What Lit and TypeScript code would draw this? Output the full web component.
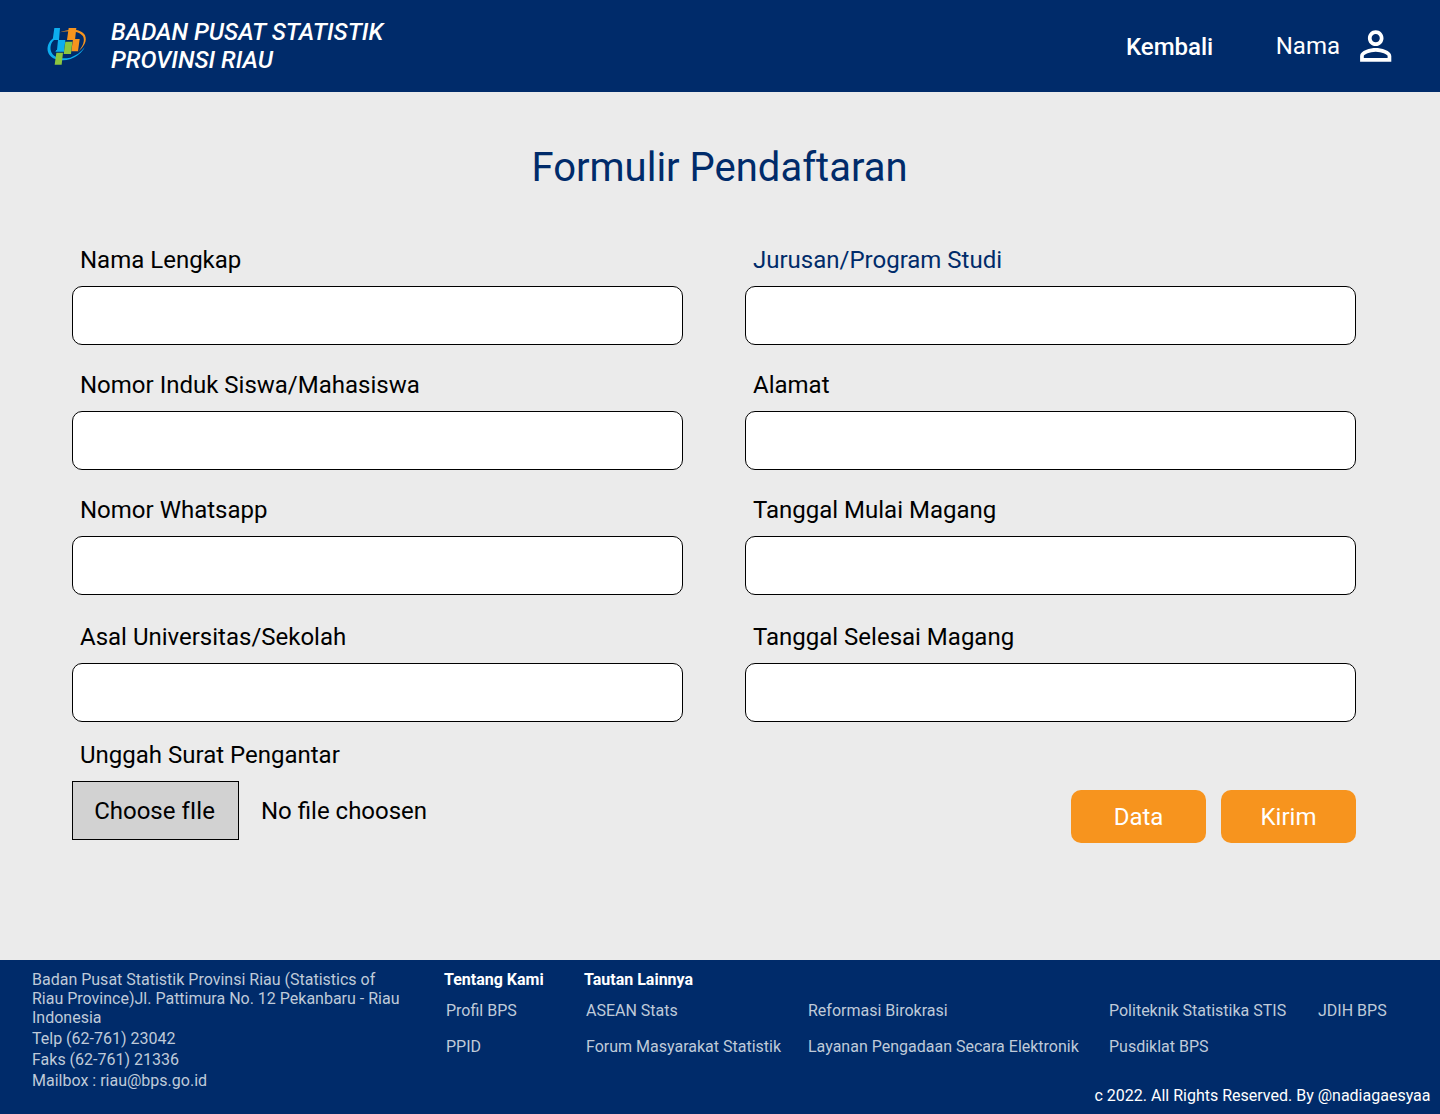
import { LitElement, html, css } from "lit";
import { customElement, property } from "lit/decorators.js";

@customElement("site-header")
class SiteHeader extends LitElement {
  static styles = css`
    :host { display: block; }
    .bar { display: flex; align-items: flex-start; box-sizing: border-box; height: 92px; padding: 15px 40px; background: #002b6a; color: #fff; font-size: 24px; line-height: 28px; }
    .logo { flex: none; width: 60px; height: 60px; }
    .org { margin: 3px 0 0 11px; font-weight: 500; font-style: italic; }
    .nav { display: flex; margin-left: auto; align-items: flex-start; }
    .back { margin: 18px 62.5px 0 0; font-weight: 500; }
    .name { margin: 17px 12px 0 0; }
    .user { width: 46px; height: 44px; margin: 9px 2px 0 0; }
  `;
  render() {
    return html`<header class="bar">
      <svg class="logo" viewBox="0 0 180 180" aria-hidden="true">
        <path d="M41 69C24 80 20 98 24 111C31 134 63 141 92 132C110 126 126 113 134 97C122 113 108 122 91 128C62 134 38 127 33 109C29 94 34 82 42 75Z" fill="#0daeef"/>
        <path d="M60 52C90 39 126 42 135 61C142 78 133 95 113 112C128 95 136 78 129 64C120 50 92 45 60 52Z" fill="#f7941e"/>
        <path d="M43 39H60L57 75H38ZM54 75H76L72 110H46L49 105H51Z" fill="#0daeef"/>
        <path d="M86 39H109L105 75H81ZM99 72H119L114 109H94Z" fill="#f7941e"/>
        <path d="M76 80H97L93 117H71ZM49 113H69L65 149H44Z" fill="#8cc63f"/>
      </svg>
      <div class="org">BADAN PUSAT STATISTIK<br>PROVINSI RIAU</div>
      <nav class="nav">
        <span class="back">Kembali</span>
        <span class="name">Nama</span>
        <svg class="user" viewBox="0 0 46 44" aria-hidden="true" fill="#fff">
          <path transform="translate(.3 -1.5) scale(1.95 1.965)" d="M12 5.9c1.16 0 2.1.94 2.1 2.1s-.94 2.1-2.1 2.1S9.9 9.16 9.9 8s.94-2.1 2.1-2.1m0 9c2.97 0 6.1 1.46 6.1 2.1v1.1H5.9V17c0-.64 3.13-2.1 6.1-2.1M12 4C9.79 4 8 5.79 8 8s1.79 4 4 4 4-1.79 4-4-1.79-4-4-4zm0 9c-2.67 0-8 1.34-8 4v3h16v-3c0-2.66-5.33-4-8-4z"/>
        </svg>
      </nav>
    </header>`;
  }
}

@customElement("form-field")
class FormField extends LitElement {
  @property() label = "";
  @property({ type: Boolean, reflect: true }) active = false;
  static styles = css`
    :host { display: block; color: #000; }
    :host([active]) { color: #002b6a; }
    .label { display: block; padding-left: 8px; margin-bottom: 12px; line-height: 28px; }
    .input { display: block; box-sizing: border-box; width: 100%; height: 59px; padding: 0 16px; border: 1px solid #000; border-radius: 10px; background: #fff; font: inherit; outline: none; }
  `;
  render() {
    return html`<label><span class="label">${this.label}</span><input class="input" type="text"></label>`;
  }
}

@customElement("site-footer")
class SiteFooter extends LitElement {
  static styles = css`
    :host { display: block; }
    .foot { display: grid; grid-template-columns: 412px 140px 1fr; box-sizing: border-box; height: 154px; padding: 10px 0 0 32px; background: #002b6a; color: #bfcad9; font-size: 16px; line-height: 19px; }
    .address { display: flex; flex-direction: column; gap: 2px; white-space: nowrap; grid-row: 1 / 3; }
    .head { color: #fff; font-weight: 700; }
    .links { display: grid; row-gap: 17px; padding: 12px 0 0 2px; white-space: nowrap; }
    .wide { grid-template-columns: 222px 301px 209px auto; }
    .copy { grid-column: 2 / 4; justify-self: end; align-self: end; padding: 0 9.5px 9px 0; color: #fff; }
  `;
  render() {
    const other = ["ASEAN Stats", "Reformasi Birokrasi", "Politeknik Statistika STIS", "JDIH BPS", "Forum Masyarakat Statistik", "Layanan Pengadaan Secara Elektronik", "Pusdiklat BPS"];
    return html`<footer class="foot">
      <div class="address">
        <span>Badan Pusat Statistik Provinsi Riau (Statistics of<br>Riau Province)Jl. Pattimura No. 12 Pekanbaru - Riau<br>Indonesia</span>
        <span>Telp (62-761) 23042</span>
        <span>Faks (62-761) 21336</span>
        <span>Mailbox : riau@bps.go.id</span>
      </div>
      <div><div class="head">Tentang Kami</div><div class="links"><span>Profil BPS</span><span>PPID</span></div></div>
      <div><div class="head">Tautan Lainnya</div><div class="links wide">${other.map((t) => html`<span>${t}</span>`)}</div></div>
      <div class="copy">c 2022. All Rights Reserved. By @nadiagaesyaa</div>
    </footer>`;
  }
}

@customElement("app-root")
class AppRoot extends LitElement {
  static styles = css`
    :host { display: flex; flex-direction: column; height: 1114px; background: #ebebeb; font-family: Roboto, sans-serif; font-size: 24px; line-height: 28px; color: #000; }
    .main { flex: 1; padding: 52px 84px 0 72px; }
    .title { margin: 0 -11px 55px 0; text-align: center; font-weight: 400; font-size: 40px; line-height: 47px; color: #002b6a; }
    .columns { display: grid; grid-template-columns: 611px 611px; column-gap: 62px; }
    .col { display: flex; flex-direction: column; gap: 26px; }
    .last { margin-top: 2px; }
    .bottom { display: flex; justify-content: space-between; margin-top: 19px; }
    .upload-label { padding-left: 8px; margin-bottom: 12px; }
    .upload { display: flex; align-items: center; gap: 22px; }
    .choose { box-sizing: border-box; width: 167px; height: 59px; padding: 0 2px 0 0; border: 1px solid #000; background: #d2d2d2; color: #000; font: inherit; text-align: center; }
    .actions { display: flex; gap: 15px; margin-top: 49px; }
    .action { width: 135px; height: 53px; padding: 0; border: 0; border-radius: 10px; background: #f7941e; color: #fff; font: inherit; }
  `;
  render() {
    return html`
      <site-header></site-header>
      <main class="main">
        <h1 class="title">Formulir Pendaftaran</h1>
        <div class="columns">
          <div class="col">
            <form-field label="Nama Lengkap"></form-field>
            <form-field label="Nomor Induk Siswa/Mahasiswa"></form-field>
            <form-field label="Nomor Whatsapp"></form-field>
            <form-field class="last" label="Asal Universitas/Sekolah"></form-field>
          </div>
          <div class="col">
            <form-field active label="Jurusan/Program Studi"></form-field>
            <form-field label="Alamat"></form-field>
            <form-field label="Tanggal Mulai Magang"></form-field>
            <form-field class="last" label="Tanggal Selesai Magang"></form-field>
          </div>
        </div>
        <div class="bottom">
          <div>
            <div class="upload-label">Unggah Surat Pengantar</div>
            <div class="upload"><button class="choose">Choose fIle</button><span>No file choosen</span></div>
          </div>
          <div class="actions"><button class="action">Data</button><button class="action">Kirim</button></div>
        </div>
      </main>
      <site-footer></site-footer>
    `;
  }
}
